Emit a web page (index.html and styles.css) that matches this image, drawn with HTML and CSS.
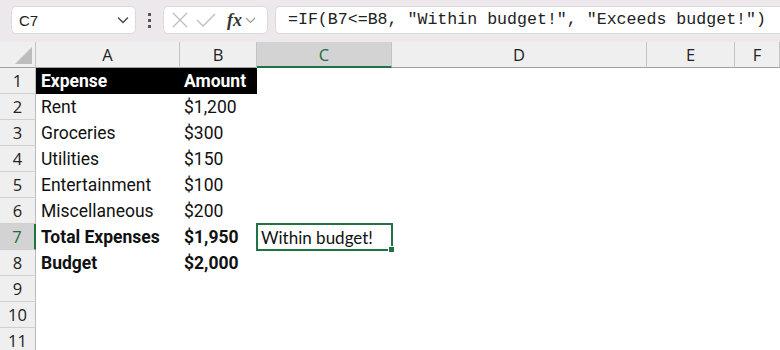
FILE: index.html
```html
<!DOCTYPE html>
<html>
<head>
<meta charset="utf-8">
<link rel="stylesheet" href="styles.css">
</head>
<body>
<div class="toolbar">
  <div class="namebox"><span class="ref">C7</span>
    <svg class="chev" width="12" height="8" viewBox="0 0 12 8"><path d="M1 1.5 L6 6.5 L11 1.5" fill="none" stroke="#444" stroke-width="1.3"/></svg>
  </div>
  <div class="dots"><i></i><i></i><i></i></div>
  <div class="fxbox">
    <svg width="18" height="18" viewBox="0 0 18 18"><path d="M2 2 L16 16 M16 2 L2 16" stroke="#bdbdbd" stroke-width="1.3" fill="none"/></svg>
    <svg width="20" height="18" viewBox="0 0 20 18"><path d="M1 9 L7 15 L19 3" stroke="#bdbdbd" stroke-width="1.3" fill="none"/></svg>
    <span class="fx">fx</span>
    <svg width="11" height="7" viewBox="0 0 11 7"><path d="M1 1 L5.5 5.5 L10 1" fill="none" stroke="#9a9a9a" stroke-width="1.1"/></svg>
  </div>
  <div class="formula">=IF(B7&lt;=B8, "Within budget!", "Exceeds budget!")</div>
</div>
<div class="sheet">
  <div class="corner"></div>
  <div class="ch">A</div><div class="ch">B</div><div class="ch sel">C</div><div class="ch">D</div><div class="ch">E</div><div class="ch">F</div>

  <div class="rh">1</div><div class="c hd">Expense</div><div class="c hd">Amount</div><div class="c"></div><div class="c"></div><div class="c"></div><div class="c"></div>
  <div class="rh">2</div><div class="c">Rent</div><div class="c">$1,200</div><div class="c"></div><div class="c"></div><div class="c"></div><div class="c"></div>
  <div class="rh">3</div><div class="c">Groceries</div><div class="c">$300</div><div class="c"></div><div class="c"></div><div class="c"></div><div class="c"></div>
  <div class="rh">4</div><div class="c">Utilities</div><div class="c">$150</div><div class="c"></div><div class="c"></div><div class="c"></div><div class="c"></div>
  <div class="rh">5</div><div class="c">Entertainment</div><div class="c">$100</div><div class="c"></div><div class="c"></div><div class="c"></div><div class="c"></div>
  <div class="rh">6</div><div class="c">Miscellaneous</div><div class="c">$200</div><div class="c"></div><div class="c"></div><div class="c"></div><div class="c"></div>
  <div class="rh sel">7</div><div class="c b">Total Expenses</div><div class="c b">$1,950</div><div class="c active">Within budget!</div><div class="c"></div><div class="c"></div><div class="c"></div>
  <div class="rh">8</div><div class="c b">Budget</div><div class="c b">$2,000</div><div class="c"></div><div class="c"></div><div class="c"></div><div class="c"></div>
  <div class="rh">9</div><div class="c"></div><div class="c"></div><div class="c"></div><div class="c"></div><div class="c"></div><div class="c"></div>
  <div class="rh">10</div><div class="c"></div><div class="c"></div><div class="c"></div><div class="c"></div><div class="c"></div><div class="c"></div>
  <div class="rh">11</div><div class="c"></div><div class="c"></div><div class="c"></div><div class="c"></div><div class="c"></div><div class="c"></div>
</div>
</body>
</html>
```
FILE: styles.css
```css
html, body { margin: 0; padding: 0; background: #fff; overflow: hidden; }
body { width: 780px; height: 350px; font-family: "Noto Sans", "Liberation Sans", sans-serif; }

.toolbar {
  height: 42px;
  background: #ece8ec;
  display: flex;
  align-items: flex-start;
  padding: 6px 0 0 11px;
  box-sizing: border-box;
}
.namebox {
  width: 125px; height: 28px;
  background: #fff;
  border: 1px solid #dcd8dc;
  border-radius: 5px;
  box-sizing: border-box;
  display: flex; align-items: center; justify-content: space-between;
  padding: 0 6px 0 7px;
}
.ref { font-size: 15px; color: #222; font-family: "Liberation Sans", sans-serif; }
.dots {
  width: 27px; height: 28px;
  display: flex; flex-direction: column; align-items: center; justify-content: center; gap: 3px;
}
.dots i { display: block; width: 3px; height: 3px; background: #555; }
.fxbox {
  width: 105px; height: 28px;
  background: #fff;
  border: 1px solid #dcd8dc;
  border-radius: 5px;
  box-sizing: border-box;
  display: flex; align-items: center;
  padding: 0 0 0 7px;
  gap: 7px;
}
.fx {
  font-family: "Liberation Serif", serif; font-style: italic; font-weight: bold;
  font-size: 18px; color: #333; margin-left: 4px; margin-right: -4px;
  line-height: 1;
}
.formula {
  margin-left: 7px;
  flex: 1;
  height: 28px;
  background: #fff;
  border: 1px solid #dcd8dc;
  border-right: none;
  border-radius: 5px 0 0 5px;
  box-sizing: border-box;
  font-family: "Liberation Mono", "DejaVu Sans Mono", monospace;
  font-size: 16.6px;
  color: #222;
  line-height: 26px;
  padding-left: 12px;
  white-space: nowrap;
  overflow: hidden;
}

.sheet {
  display: grid;
  grid-template-columns: 36px 144px 77px 135px 255px 88px 1fr;
  grid-template-rows: 26px repeat(11, 26px);
}
.corner {
  background: #efefef;
  border-right: 1px solid #c4c4c4;
  border-bottom: 1px solid #a0a0a0;
  position: relative;
}
.corner::after {
  content: ""; position: absolute; right: 3px; bottom: 3px;
  width: 0; height: 0;
  border-left: 17px solid transparent;
  border-bottom: 17px solid #bdbdbd;
}
.ch {
  background: #efefef;
  border-right: 1px solid #c4c4c4;
  border-bottom: 1px solid #a0a0a0;
  font-family: "Open Sans", "Noto Sans", sans-serif;
  font-size: 16.5px; color: #222;
  display: flex; align-items: center; justify-content: center;
}
.ch.sel { background: #d3d3d3; border-bottom: 2px solid #217346; color: #1e6b40; }
.rh {
  background: #efefef;
  border-right: 1px solid #bdbdbd;
  border-bottom: 1px solid #d0d0d0;
  font-family: "Open Sans", "Noto Sans", sans-serif;
  font-size: 16.5px; color: #222;
  display: flex; align-items: center; justify-content: center;
}
.rh.sel { background: #d3d3d3; border-right: 2px solid #217346; color: #1e6b40; }
.c {
  font-family: Roboto, "Liberation Sans", sans-serif;
  font-size: 17.5px; color: #111;
  padding-left: 4px;
  display: flex; align-items: center;
  white-space: nowrap;
}
.sheet > .c:nth-child(7n+2) { padding-left: 5px; }
.c.hd { background: #000; color: #fff; font-weight: bold; }
.c.b { font-weight: bold; }
.active {
  font-family: Lato, sans-serif;
  font-size: 17px;
  padding-left: 4px;
  outline: 2px solid #217346;
  outline-offset: -1px;
  position: relative;
}
.active::after {
  content: ""; position: absolute; right: -3px; bottom: -3px;
  width: 5px; height: 5px; background: #217346; border: 1px solid #fff;
}
```
